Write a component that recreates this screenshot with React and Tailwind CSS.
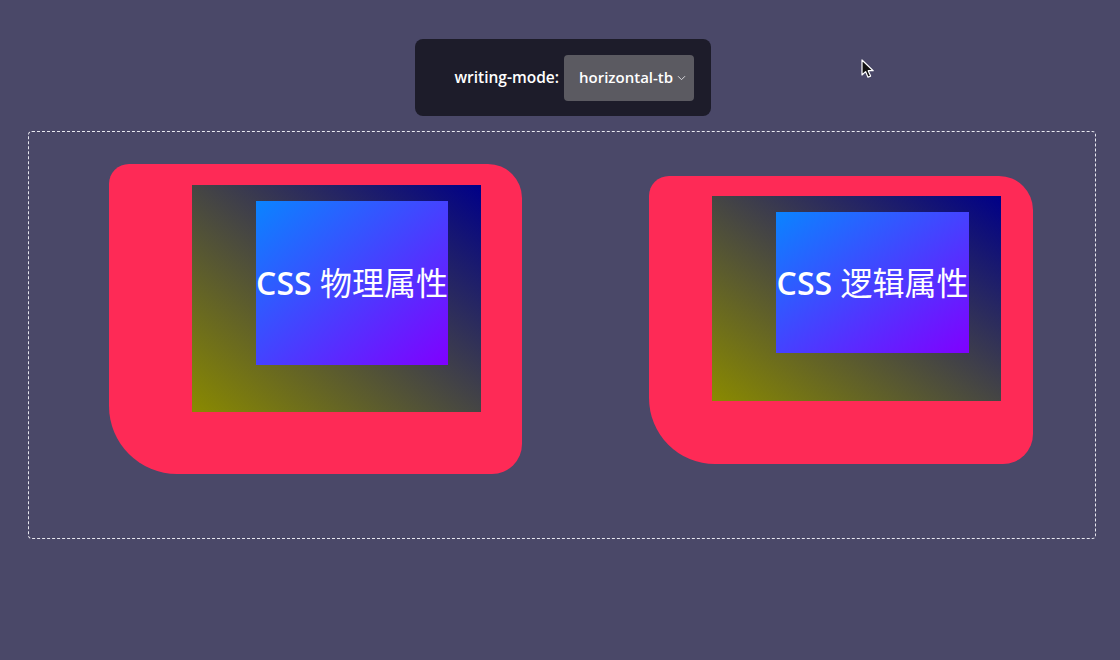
import React from 'react';

const cjk = '"Open Sans", "Noto Sans CJK SC", sans-serif';

function Demo({ label, outer, inner }) {
  return (
    <div className={`bg-[#fe2a56] ${outer}`}>
      <div className={`bg-[linear-gradient(to_top_right,#8a8a00,#000088)] ${inner}`}>
        <div className="flex h-full items-center justify-center bg-[linear-gradient(to_bottom_right,#0a84ff,#8000ff)]">
          <span className="whitespace-nowrap text-[32px] leading-none text-white" style={{ fontFamily: cjk }}>
            <span className="font-semibold">CSS</span> {label}
          </span>
        </div>
      </div>
    </div>
  );
}

export default function App() {
  return (
    <div className="relative h-[660px] w-[1120px] overflow-hidden bg-[#4a4868] font-['Open_Sans',sans-serif]">
      <div className="flex justify-center pt-[39px]">
        <div className="ml-[6px] flex h-[77px] w-[296px] items-center justify-end gap-[5px] rounded-[8px] bg-[#1d1c2a] pr-[17px]">
          <span className="text-[15.5px] font-semibold text-white">writing-mode:</span>
          <div className="flex h-[46px] w-[130px] items-center rounded-[4px] bg-[#5b5a61] pl-[15px] pr-[8px]">
            <span className="text-[15px] font-semibold text-white">horizontal-tb</span>
            <svg className="ml-auto" width="9" height="6" viewBox="0 0 9 6" fill="none">
              <path d="M1 1.2l3.5 3.5L8 1.2" stroke="#d8d8dc" strokeWidth="1" />
            </svg>
          </div>
        </div>
      </div>

      <div className="ml-[28px] mt-[15px] flex h-[408px] w-[1068px] items-start rounded-[4px] border border-dashed border-[#e8e8f0] pl-[80px]">
        <Demo
          label="物理属性"
          outer="mt-[32px] h-[310px] w-[413px] rounded-[20px_34px_30px_68px] pl-[83px] pr-[41px] pt-[21px] pb-[62px]"
          inner="h-full pl-[64px] pr-[33px] pt-[16px] pb-[47px]"
        />
        <Demo
          label="逻辑属性"
          outer="ml-[127px] mt-[44px] h-[288px] w-[384px] rounded-[20px_34px_30px_66px] pl-[63px] pr-[32px] pt-[20px] pb-[63px]"
          inner="h-full pl-[64px] pr-[32px] pt-[16px] pb-[48px]"
        />
      </div>

      <svg className="absolute left-[861px] top-[59px]" width="14" height="20" viewBox="0 0 14 20">
        <path d="M1 1v15l3.6-3.4 2.4 5.6 2.6-1.1-2.4-5.4h5z" fill="#111" stroke="#fff" strokeWidth="1.2" strokeLinejoin="round" />
      </svg>
    </div>
  );
}
